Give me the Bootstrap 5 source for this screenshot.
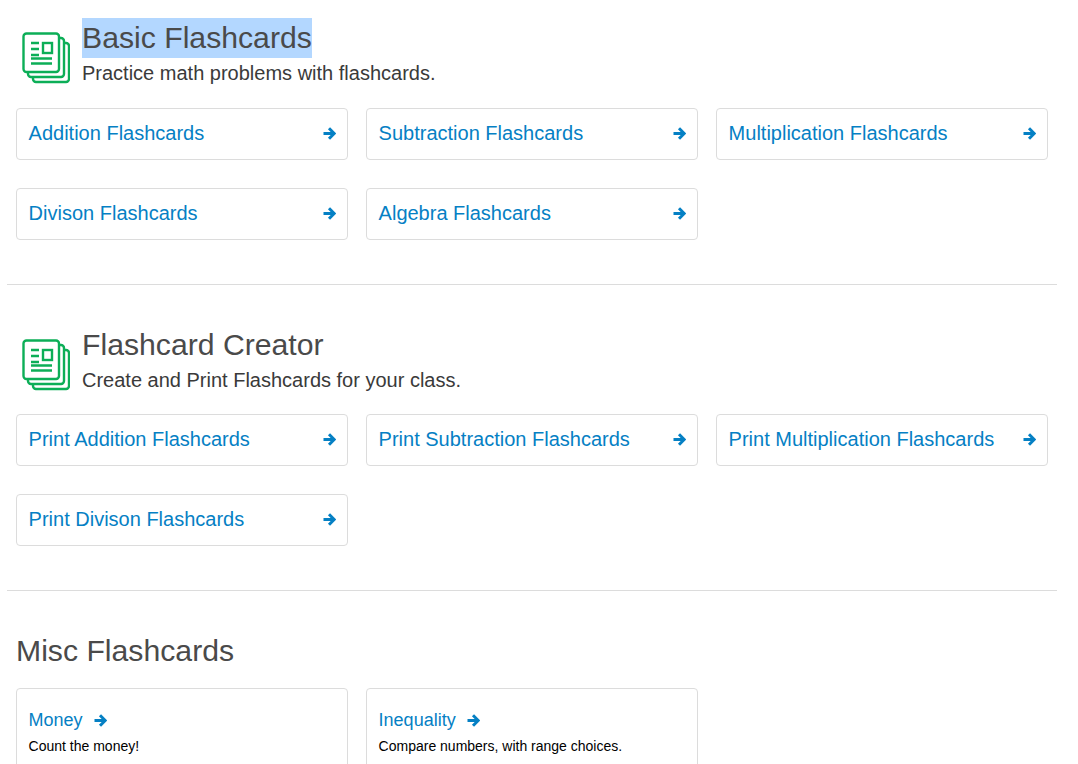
<!DOCTYPE html>
<html lang="en">
<head>
  <meta charset="UTF-8" />
  <title>Flashcards</title>
  <link href="https://cdn.jsdelivr.net/npm/bootstrap@5.3.0/dist/css/bootstrap.min.css" rel="stylesheet" />
  <style>
    body {
      font-family: "Liberation Sans", Arial, sans-serif;
      color: #3a3a3a;
      background: #fff;
    }
    .page-wrap { width: 1050px; margin-left: 7px; padding-top: 18px; }
    .section-head { padding-left: 15px; gap: 12px; margin-bottom: 20px; }
    .section-head.head-tight { margin-bottom: 19px; }
    .section-icon { width: 48px; height: 52px; margin-top: 14px; flex: none; }
    .section-title { font-size: 30.2px; line-height: 40px; font-weight: 400; color: #4a4a4a; margin: 0; }
    .section-sub { font-size: 20px; line-height: 30px; margin: 0; }
    .picked { background: #b3d7ff; display: inline-block; }
    .misc-title { padding-left: 9px; margin-bottom: 17px; }
    .card-row { --bs-gutter-x: 18px; --bs-gutter-y: 28px; }
    .flash-link {
      display: flex;
      justify-content: space-between;
      align-items: center;
      height: 52px;
      padding: 0 11.5px 2px 11.6px;
      border: 1px solid #dcdcdc;
      border-radius: 4px;
      color: #0580c4;
      font-size: 20px;
      text-decoration: none;
    }
    .arrow-ico { width: 13px; height: 13px; flex: none; }
    .section-rule { margin: 44px 0 40px; border-top: 1px solid #a8a8a8; opacity: .4; }
    .misc-card { border: 1px solid #dcdcdc; border-radius: 4px; padding: 20px 12px 20px 11.6px; height: 110px; }
    .misc-link { color: #0580c4; font-size: 18px; line-height: 22px; text-decoration: none; display: flex; align-items: center; gap: 11px; }
    .misc-desc { font-size: 14px; line-height: 18px; color: #000; margin: 6px 0 0; }
  </style>
</head>
<body>
  <svg width="0" height="0" class="d-block">
    <defs>
      <symbol id="stack" viewBox="0 0 48 52">
        <g fill="none" stroke="#0cae57" stroke-width="2.400">
          <rect x="1.500" y="1.500" width="35.500" height="38.500" rx="3" />
          <path d="M38 6h1a3 3 0 0 1 3 3v33a3 3 0 0 1-3 3H9a3 3 0 0 1-3-3v-1" />
          <path d="M43 11h1a3 3 0 0 1 3 3v33a3 3 0 0 1-3 3H14a3 3 0 0 1-3-3v-1" />
          <path d="M9 11h8M9 17h8M9 23h8M9 26.500h21M9 31.500h21" />
          <rect x="21" y="11" width="9" height="10" />
        </g>
      </symbol>
      <symbol id="arrow" viewBox="0 0 13 13">
        <path d="M.5 6.500h10.500M6 1.300l5.200 5.200L6 11.700" fill="none" stroke="#0580c4" stroke-width="3" />
      </symbol>
    </defs>
  </svg>

  <div class="page-wrap">
    <!-- Basic -->
    <div class="d-flex section-head">
      <svg class="section-icon"><use href="#stack" /></svg>
      <div>
        <h2 class="section-title"><span class="picked">Basic Flashcards</span></h2>
        <p class="section-sub">Practice math problems with flashcards.</p>
      </div>
    </div>
    <div class="row mx-0 card-row">
      <div class="col-4"><a class="flash-link" href="#">Addition Flashcards <svg class="arrow-ico"><use href="#arrow" /></svg></a></div>
      <div class="col-4"><a class="flash-link" href="#">Subtraction Flashcards <svg class="arrow-ico"><use href="#arrow" /></svg></a></div>
      <div class="col-4"><a class="flash-link" href="#">Multiplication Flashcards <svg class="arrow-ico"><use href="#arrow" /></svg></a></div>
      <div class="col-4"><a class="flash-link" href="#">Divison Flashcards <svg class="arrow-ico"><use href="#arrow" /></svg></a></div>
      <div class="col-4"><a class="flash-link" href="#">Algebra Flashcards <svg class="arrow-ico"><use href="#arrow" /></svg></a></div>
    </div>

    <hr class="section-rule" />

    <!-- Creator -->
    <div class="d-flex section-head head-tight">
      <svg class="section-icon"><use href="#stack" /></svg>
      <div>
        <h2 class="section-title">Flashcard Creator</h2>
        <p class="section-sub">Create and Print Flashcards for your class.</p>
      </div>
    </div>
    <div class="row mx-0 card-row">
      <div class="col-4"><a class="flash-link" href="#">Print Addition Flashcards <svg class="arrow-ico"><use href="#arrow" /></svg></a></div>
      <div class="col-4"><a class="flash-link" href="#">Print Subtraction Flashcards <svg class="arrow-ico"><use href="#arrow" /></svg></a></div>
      <div class="col-4"><a class="flash-link" href="#">Print Multiplication Flashcards <svg class="arrow-ico"><use href="#arrow" /></svg></a></div>
      <div class="col-4"><a class="flash-link" href="#">Print Divison Flashcards <svg class="arrow-ico"><use href="#arrow" /></svg></a></div>
    </div>

    <hr class="section-rule" />

    <!-- Misc -->
    <h2 class="section-title misc-title">Misc Flashcards</h2>
    <div class="row mx-0 card-row">
      <div class="col-4">
        <div class="misc-card">
          <a class="misc-link" href="#">Money <svg class="arrow-ico"><use href="#arrow" /></svg></a>
          <p class="misc-desc">Count the money!</p>
        </div>
      </div>
      <div class="col-4">
        <div class="misc-card">
          <a class="misc-link" href="#">Inequality <svg class="arrow-ico"><use href="#arrow" /></svg></a>
          <p class="misc-desc">Compare numbers, with range choices.</p>
        </div>
      </div>
    </div>
  </div>

  <script src="https://cdn.jsdelivr.net/npm/bootstrap@5.3.0/dist/js/bootstrap.bundle.min.js"></script>
</body>
</html>
